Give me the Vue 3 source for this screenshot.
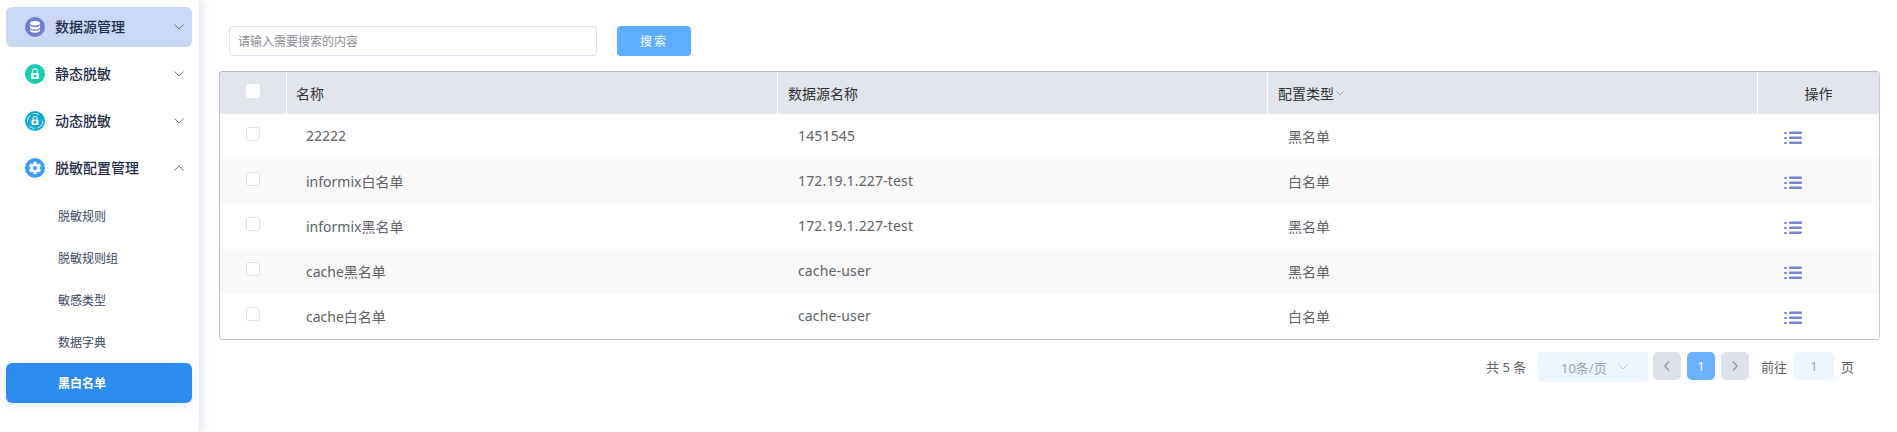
<script setup>
const menus = [
  { name: '数据源管理', icon: 'db', open: false, current: true },
  { name: '静态脱敏', icon: 'lock', open: false },
  { name: '动态脱敏', icon: 'cam', open: false },
  { name: '脱敏配置管理', icon: 'gear', open: true },
]
const subs = ['脱敏规则', '脱敏规则组', '敏感类型', '数据字典', '黑白名单']
const rows = [
  { name: '22222', source: '1451545', type: '黑名单' },
  { name: 'informix白名单', source: '172.19.1.227-test', type: '白名单' },
  { name: 'informix黑名单', source: '172.19.1.227-test', type: '黑名单' },
  { name: 'cache黑名单', source: 'cache-user', type: '黑名单' },
  { name: 'cache白名单', source: 'cache-user', type: '白名单' },
]
</script>

<template>
  <div class="page">
    <aside class="side">
      <div v-for="m in menus" :key="m.name" class="menu" :class="{ current: m.current }">
        <span class="dot" :class="m.icon">
          <svg v-if="m.icon === 'db'" width="14" height="14" viewBox="0 0 14 14" fill="#fff">
            <ellipse cx="7" cy="3.2" rx="5" ry="2.2" />
            <path d="M2 5.2c1 1.3 3 1.8 5 1.8s4-.5 5-1.8v2.2c0 1.2-2.2 2.1-5 2.1s-5-.9-5-2.1z" />
            <path d="M2 9.2c1 1.1 3 1.6 5 1.6s4-.5 5-1.6v1.4c0 1.3-2.2 2.2-5 2.2s-5-.9-5-2.2z" />
          </svg>
          <svg v-else-if="m.icon === 'lock'" width="14" height="14" viewBox="0 0 14 14">
            <path d="M4.500 6V4.400a2.500 2.500 0 0 1 5 0V6" fill="none" stroke="#cdf3e9" stroke-width="1.100" />
            <rect x="3" y="6" width="8" height="6" rx="1" fill="#e6faf5" />
            <circle cx="7" cy="9" r="1.300" fill="#19cdae" />
          </svg>
          <svg v-else-if="m.icon === 'cam'" width="20" height="20" viewBox="0 0 20 20">
            <circle cx="10" cy="10" r="7.500" fill="none" stroke="#e4f6fb" stroke-width="1" stroke-dasharray="9 3 6 4 8 3 6 8" />
            <path d="M8 8.500V7.300a2 2 0 0 1 4 0v1.200" fill="none" stroke="#fff" stroke-width="1" />
            <rect x="6.500" y="8.500" width="7" height="5.500" rx="1.200" fill="#fff" />
            <circle cx="10" cy="11.200" r="1.400" fill="#0eaad6" />
          </svg>
          <svg v-else width="14" height="14" viewBox="0 0 14 14" fill="#fff">
            <g>
              <rect x="5.300" y="0.800" width="3.400" height="12.400" rx="0.800" />
              <rect x="5.300" y="0.800" width="3.400" height="12.400" rx="0.800" transform="rotate(60 7 7)" />
              <rect x="5.300" y="0.800" width="3.400" height="12.400" rx="0.800" transform="rotate(120 7 7)" />
            </g>
            <circle cx="7" cy="7" r="4.500" />
            <circle cx="7" cy="7" r="2" fill="#3a9ffb" />
          </svg>
        </span>
        <span class="menu-name">{{ m.name }}</span>
        <svg class="arrow" width="10" height="6" viewBox="0 0 10 6" fill="none" stroke="#6b7a90" stroke-width="1">
          <path v-if="m.open" d="M.5 5.500 5 1l4.500 4.500" />
          <path v-else d="M.5.500 5 5 9.500.500" />
        </svg>
      </div>
      <div class="subs">
        <div v-for="s in subs" :key="s" class="sub" :class="{ active: s === '黑白名单' }">{{ s }}</div>
      </div>
    </aside>

    <main class="main">
      <div class="search">
        <input class="search-input" placeholder="请输入需要搜索的内容" />
        <button class="search-btn">搜索</button>
      </div>

      <div class="table">
        <div class="row head">
          <div class="cell check"><span class="box head-box"></span></div>
          <div class="cell col">名称</div>
          <div class="cell col">数据源名称</div>
          <div class="cell col">配置类型<svg class="sort" width="8" height="5" viewBox="0 0 8 5" fill="none" stroke="#a8abb2"><path d="M.5.500 4 4 7.500.500" /></svg></div>
          <div class="cell ops">操作</div>
        </div>
        <div v-for="(r, i) in rows" :key="r.name" class="row body" :class="{ stripe: i % 2 === 1 }">
          <div class="cell check"><span class="box"></span></div>
          <div class="cell col">{{ r.name }}</div>
          <div class="cell col shift source">{{ r.source }}</div>
          <div class="cell col shift">{{ r.type }}</div>
          <div class="cell ops">
            <svg width="18" height="14" viewBox="0 0 18 14" fill="#7b83d6">
              <rect x="0" y="1" width="3" height="2" rx="1" />
              <rect x="0" y="6" width="3" height="2" rx="1" />
              <rect x="0" y="11" width="3" height="2" rx="1" />
              <rect x="5" y="0.500" width="13" height="2.500" rx="1" />
              <rect x="5" y="5.500" width="13" height="2.500" rx="1" />
              <rect x="5" y="10.500" width="13" height="2.500" rx="1" />
            </svg>
          </div>
        </div>
      </div>

      <div class="pager">
        <span class="total">共 5 条</span>
        <div class="size">
          <span>10条/页</span>
          <svg width="10" height="6" viewBox="0 0 10 6" fill="none" stroke="#c0c8d8"><path d="M.5.500 5 5 9.500.500" /></svg>
        </div>
        <button class="pg nav">
          <svg width="6" height="10" viewBox="0 0 6 10" fill="none" stroke="#8f97b0" stroke-width="1.300"><path d="M5 .500.800 5 5 9.500" /></svg>
        </button>
        <button class="pg on">1</button>
        <button class="pg nav">
          <svg width="6" height="10" viewBox="0 0 6 10" fill="none" stroke="#8f97b0" stroke-width="1.300"><path d="M1 .500 5.200 5 1 9.500" /></svg>
        </button>
        <span class="goto">前往</span>
        <span class="jump">1</span>
        <span class="unit">页</span>
      </div>
    </main>
  </div>
</template>

<style>
html, body {
  background: #fff;
}
</style>

<style scoped>
.page {
  display: flex;
  width: 1897px;
  height: 432px;
  overflow: hidden;
  font-family: "Noto Sans", "Noto Sans CJK SC", sans-serif;
  color: #606266;
  background: #fff;
}

.side {
  width: 199px;
  flex: none;
  box-sizing: border-box;
  padding: 7px 7px 0 6px;
  background: #fff;
  box-shadow: 3px 0 8px rgba(170, 178, 210, 0.35);
}

.menu {
  display: flex;
  align-items: center;
  height: 40px;
  margin-bottom: 7px;
  padding-left: 19px;
  padding-right: 8px;
  border-radius: 6px;
  color: #1f2d4d;
  font-size: 14px;
  font-weight: 500;
}

.menu.current {
  background: #c9d8f5;
}

.dot {
  display: flex;
  align-items: center;
  justify-content: center;
  width: 20px;
  height: 20px;
  border-radius: 50%;
  margin-right: 10px;
}

.dot.db { background: #6c7fd0; }
.dot.lock { background: #19cdae; }
.dot.cam { background: #0eaad6; }
.dot.gear { background: #3a9ffb; }

.menu-name {
  flex: 1;
  padding-bottom: 2px;
}

.subs {
  padding-top: 1px;
}

.sub {
  display: flex;
  align-items: center;
  height: 40px;
  margin-bottom: 2px;
  padding-left: 52px;
  font-size: 12px;
  color: #3a4660;
  border-radius: 6px;
}

.sub:nth-child(4) {
  margin-bottom: 1px;
}

.sub.active {
  background: #2d8cf0;
  color: #fff;
  font-weight: 700;
  box-shadow: 0 3px 8px rgba(45, 140, 240, 0.15);
}

.main {
  flex: 1;
  padding: 26px 17px 0 20px;
  min-width: 0;
}

.search {
  display: flex;
  align-items: center;
  gap: 20px;
  padding-left: 10px;
  margin-bottom: 15px;
}

.search-input {
  width: 368px;
  height: 30px;
  box-sizing: border-box;
  padding: 0 8px;
  border: 1px solid #dcdff0;
  border-radius: 4px;
  font-family: inherit;
  font-size: 12px;
  outline: none;
}

.search-input::placeholder {
  color: #8a8d94;
}

.search-btn {
  width: 74px;
  height: 30px;
  border: none;
  border-radius: 4px;
  background: #5cacff;
  color: #fff;
  font-family: inherit;
  font-size: 12px;
  letter-spacing: 2px;
}

.table {
  border: 1px solid;
  border-color: #b9bcc6 #c6c9de #bcbfd8 #b9bcc6;
  border-radius: 4px;
  overflow: hidden;
}

.row {
  display: flex;
}

.head {
  height: 42px;
  background: #e2e5ec;
  color: #303133;
}

.body {
  height: 45px;
  background: #fff;
}

.body.stripe {
  background: #f9f9f9;
}

.cell {
  display: flex;
  align-items: center;
  box-sizing: border-box;
  font-size: 14px;
}

.check {
  width: 66px;
  justify-content: center;
}

.col {
  width: 490px;
  padding-left: 20px;
}

.body .col {
  padding-bottom: 2px;
}

.body .shift {
  padding-left: 21px;
}

.body .check + .col {
  width: 491px;
}

.source {
  letter-spacing: 0.15px;
}

.ops {
  flex: 1;
  padding-left: 27px;
}

.body .ops {
  padding-top: 2px;
}

.head .col {
  padding-left: 10px;
  border-left: 1px solid #fff;
}

.head .col:nth-child(2) {
  width: 491px;
  padding-left: 9px;
}

.head .ops {
  justify-content: center;
  padding-left: 0;
  border-left: 1px solid #fff;
}

.box {
  width: 14px;
  height: 14px;
  box-sizing: border-box;
  margin-top: -6px;
  border: 1px solid #dcdff0;
  border-radius: 3px;
  background: #fff;
}

.head-box {
  margin-top: -4px;
  border-color: #fff;
}

.sort {
  margin-left: 2px;
}

.pager {
  display: flex;
  align-items: flex-start;
  margin-top: 12px;
  padding-left: 1267px;
  font-size: 13px;
}

.total {
  width: 52px;
  line-height: 30px;
}

.size {
  display: flex;
  align-items: center;
  justify-content: space-between;
  width: 110px;
  height: 30px;
  box-sizing: border-box;
  padding: 0 20px 0 23px;
  background: #edf5fe;
  border-radius: 3px;
  color: #9aa3bd;
}

.pg {
  display: flex;
  align-items: center;
  justify-content: center;
  width: 28px;
  height: 28px;
  padding: 0;
  margin-left: 6px;
  border: none;
  border-radius: 5px;
  font-family: inherit;
  font-size: 13px;
}

.size + .pg {
  margin-left: 5px;
}

.nav {
  background: #dde1e9;
}

.on {
  background: #6cb0ff;
  color: #fff;
}

.goto {
  margin-left: 12px;
  line-height: 30px;
}

.jump {
  width: 40px;
  height: 28px;
  margin-left: 7px;
  line-height: 28px;
  text-align: center;
  border-radius: 5px;
  background: #edf5fe;
  color: #9aa3bd;
}

.unit {
  margin-left: 7px;
  line-height: 30px;
}
</style>
